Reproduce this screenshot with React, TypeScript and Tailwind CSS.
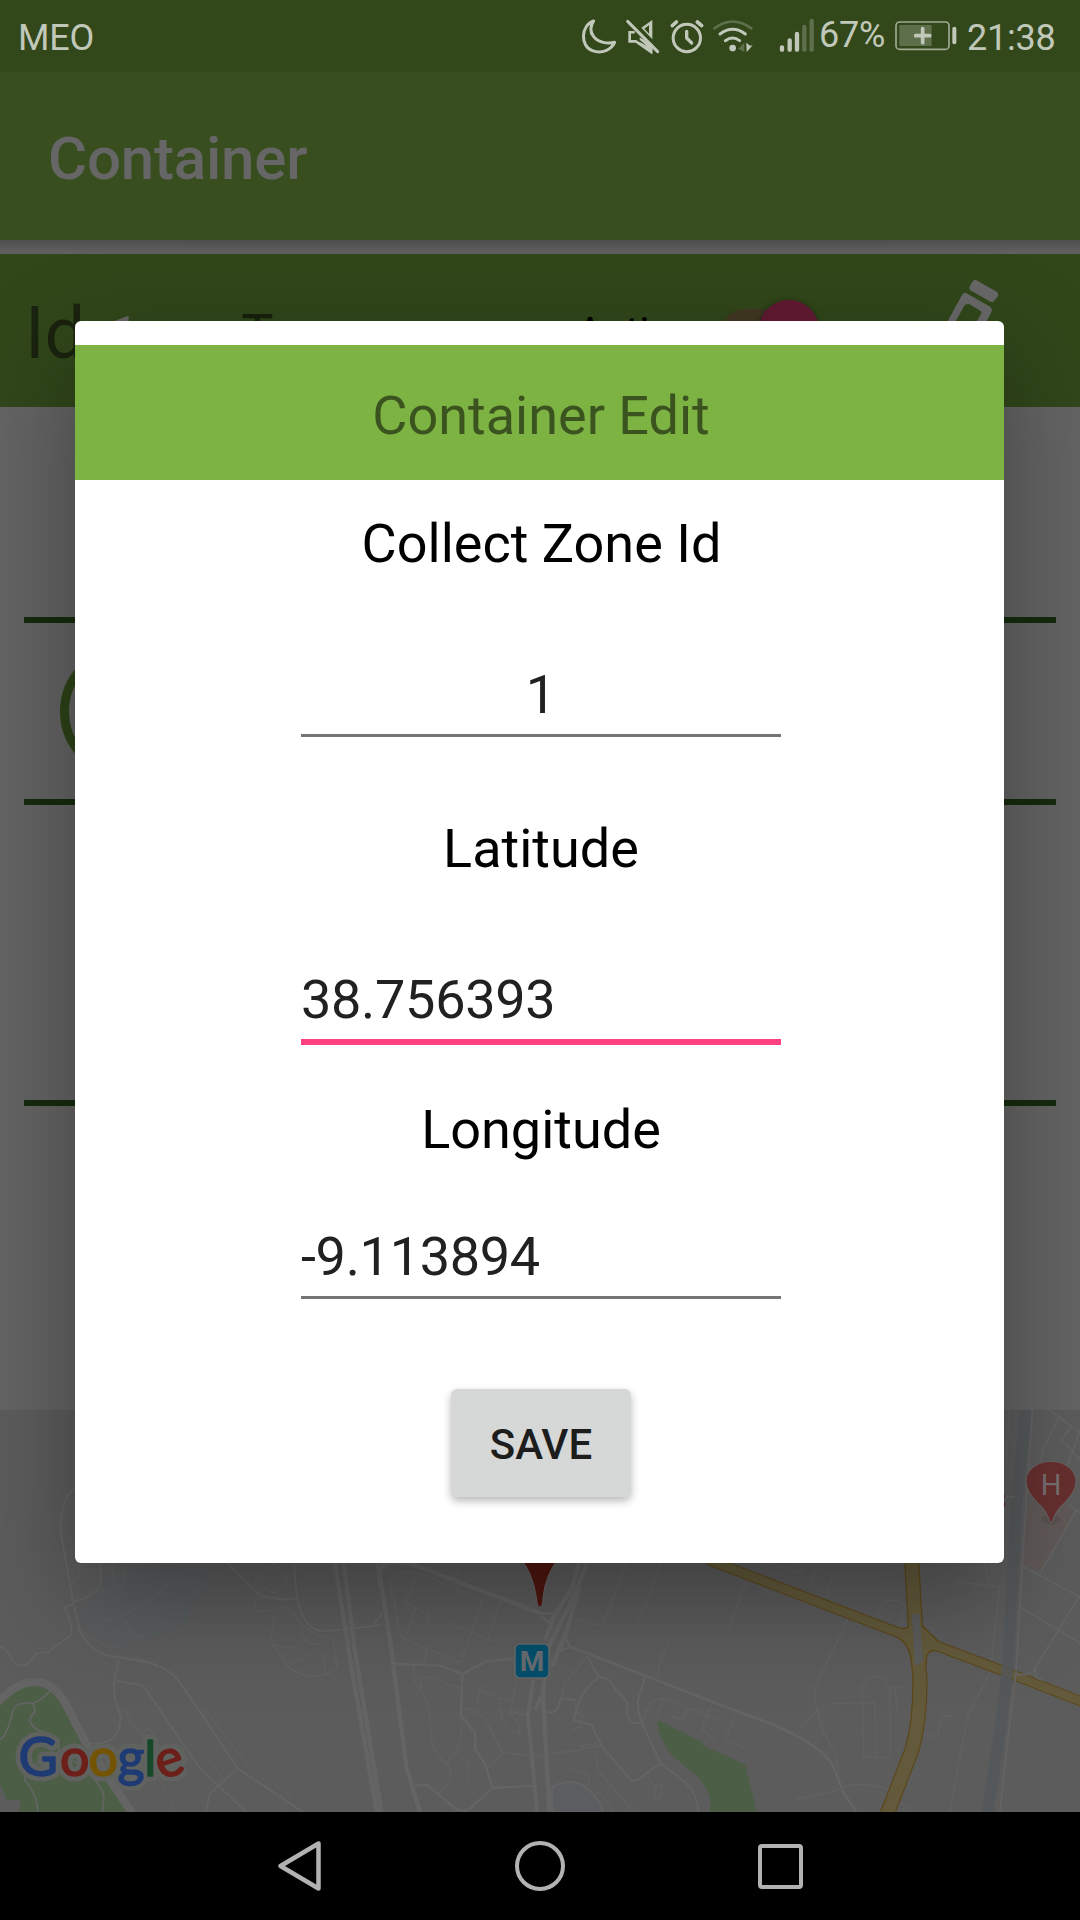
import type { ReactNode } from "react";

function StatusIcon({ x, w, children }: { x: number; w: number; children: ReactNode }) {
  return (
    <svg
      className="h-[72px] shrink-0"
      width={w / 3}
      height={72}
      viewBox={`${x} 0 ${w} 216`}
      fill="none"
      stroke="#c1c8ba"
      strokeLinecap="round"
      strokeLinejoin="round"
    >
      {children}
    </svg>
  );
}

function StatusBar() {
  return (
    <div className="flex h-[72px] items-start bg-[#32481b] text-[36px] leading-[42px] tracking-[-0.2px] text-[#c1c8ba]">
      <span className="mt-[17px] ml-[18px] flex-1">MEO</span>
      <StatusIcon x={60} w={130}>
        <path d="M101 63 C62 76 60 138 97 152 C126 163 154 149 164 127 C142 132 115 128 101 110 C89 95 91 78 101 63 Z" strokeWidth="9" />
      </StatusIcon>
      <StatusIcon x={190} w={130}>
        <path d="M222 97 H210 V124 H229 L274 156 V134" strokeWidth="8" strokeLinejoin="miter" />
        <path d="M245 83 L278 60 V118 Z M240 112 L278 136 V158 L240 130 Z" fill="#c1c8ba" stroke="none" />
        <path d="M254 86 L268 76 V101 Z M222 104 L262 138 L230 120 L214 120 V101 H222 Z" fill="#32481b" stroke="none" />
        <path d="M204 64 L294 155" strokeWidth="9" />
      </StatusIcon>
      <StatusIcon x={320} w={120}>
        <circle cx="379.500" cy="114" r="41" strokeWidth="9" />
        <path d="M379 94 V114 L394 129" strokeWidth="10" />
        <path d="M336 77 L348 66 M424 77 L411 66" strokeWidth="11" />
      </StatusIcon>
      <StatusIcon x={440} w={205}>
        <path d="M462 85 Q517 44 573 85" stroke="#5d704b" strokeWidth="8" />
        <path d="M479 102 Q517 74 555 102 M495 122 Q517 106 538 122" strokeWidth="9" />
        <circle cx="517" cy="144" r="10" fill="#c1c8ba" stroke="none" />
        <path d="M552 128 V156 L534 146 Z" fill="#5d704b" stroke="none" />
        <path d="M558 128 L569 137 L577 136 L559 156 Z" fill="#c1c8ba" stroke="none" />
      </StatusIcon>
      <StatusIcon x={645} w={132}>
        <path d="M666 142 V149 M689 121 V149 M711 102 V149" strokeWidth="13" />
        <path d="M733 81 V149 M755 63 V149" stroke="#5d704b" strokeWidth="13" />
      </StatusIcon>
      <span className="mt-[14px] w-[69px]">67%</span>
      <StatusIcon x={984} w={234}>
        <rect x="1008" y="66" width="159" height="82" rx="11" strokeWidth="5" stroke="#9faa92" />
        <rect x="1018" y="75" width="97" height="63" rx="3" fill="#5d704b" stroke="none" />
        <path d="M1088 86 V128 M1067 107 H1109" strokeWidth="11" />
        <path d="M1183 86 V127" strokeWidth="12" />
      </StatusIcon>
      <span className="mt-[17px] w-[114px] pl-px">21:38</span>
    </div>
  );
}

function ContainerBand() {
  return (
    <div className="flex h-[153px] items-start overflow-hidden bg-[#31471a]">
      <span className="mt-[38px] ml-[25px] text-[72px] leading-[84px] text-[#1a230f]">Id</span>
      <span className="mt-[49px] ml-[22px] w-[134px] text-[60px] leading-[70px] text-[#666]">1</span>
      <span className="mt-[48px] w-[335px] text-[54px] leading-[63px] text-[#17200c]">Type</span>
      <span className="mt-[54px] w-[147px] text-[42px] leading-[49px] text-black">Active</span>
      <div className="mt-[55px] flex h-[42px] w-[96px] items-center justify-end rounded-full bg-[#423823]">
        <div className="-my-2 h-[60px] w-[60px] shrink-0 rounded-full bg-[#621a33] shadow-[0_1px_6px_rgba(0,0,0,0.4)]" />
      </div>
      <svg className="mt-[16px] ml-[106px]" width="90" height="110" viewBox="925 270 90 110" fill="#686868">
        <path d="M976 280 L997 292 Q999 294 998 296 L994 301 Q993 302.500 990 301.500 L970 290 Q968.500 288 970 286 L973 281 Q974 279.500 976 280 Z" />
        <path
          fillRule="evenodd"
          d="M966 293 L989 306 Q993 308.500 991.500 312 L966 360 L932 372 L934 346 L962 295 Q964 292 966 293 Z M968 304 Q965 304 963 308 L942 346 L941 358 L959 351 L981 314 Q982 311 979 310 L970 304.500 Z"
        />
      </svg>
    </div>
  );
}

function Details() {
  return (
    <div className="mx-6 h-[1003px] pt-[210px]">
      <div className="flex h-[188px] items-center border-y-[6px] border-[#162b0e] pl-9">
        <div className="h-[133px] w-[133px] shrink-0 rounded-full border-[9px] border-[#2d4317]" />
      </div>
      <div className="h-[301px] border-b-[6px] border-[#162b0e]" />
    </div>
  );
}

function GoogleLogo() {
  const letters = [
    { ch: "G", x: 18.5, size: 54, color: "#1f3b74" },
    { ch: "o", x: 60, size: 52, color: "#6d1f1a" },
    { ch: "o", x: 88.5, size: 52, color: "#745403" },
    { ch: "g", x: 117.5, size: 52, color: "#1f3b74" },
    { ch: "l", x: 144.5, size: 49, color: "#16482a" },
    { ch: "e", x: 156, size: 52, color: "#6d1f1a" },
  ];
  return (
    <g fontFamily="Lato, sans-serif" strokeLinejoin="round">
      <g stroke="#5f625e" strokeWidth="11" fill="none">
        {letters.map((l, i) => (
          <text key={i} x={l.x} y="366" fontSize={l.size}>
            {l.ch}
          </text>
        ))}
      </g>
      {letters.map((l, i) => (
        <text
          key={i}
          x={l.x}
          y="366"
          fontSize={l.size}
          fill={l.color}
          stroke={l.color}
          strokeWidth="1.6"
          transform={l.ch === "e" ? "rotate(-18 170 353)" : undefined}
        >
          {l.ch}
        </text>
      ))}
    </g>
  );
}

function MapView() {
  return (
    <svg className="block h-[402px] w-[1080px] bg-[#5c5c5c]" viewBox="0 0 1080 402" fill="none" strokeLinejoin="round">
      <g transform="translate(0 -10) scale(0.34439 0.33333)" stroke="#646464">
        <path d="M330 510 L600 500 L606 560 L550 610 L545 670 L440 710 L340 745 L250 690 L230 640 Z" fill="#595d61" stroke="none" opacity="0.6" />
        <path d="M0 910 Q90 810 160 870 L370 1236 H55 L60 1200 H20 L0 1150 Z" fill="#4c5e46" stroke="none" />
        <path d="M-10 910 Q50 847 95 847 Q150 840 190 910 L255 1040 L390 1250" strokeWidth="24" />
        <path d="M147 872 Q120 900 96 910 Q45 905 38 930 Q20 1010 0 1018 M96 910 L102 935 Q70 965 110 990 Q180 1010 170 1060 Q70 1100 72 1140 Q108 1180 110 1236 M170 1050 Q290 1130 302 1190 L298 1236" strokeWidth="5" />
        <path d="M218 260 Q170 310 177 400 L212 605 L233 695 Q270 760 320 768 L425 784 Q500 810 520 845 L590 950 L690 1105 L885 1240" strokeWidth="6" />
        <path d="M212 605 Q293 585 292 540 V488 M212 612 L185 622 Q210 660 207 705 L140 755 L104 762 Q70 820 35 780 L15 745 L0 740 M345 780 L332 845 V890 L350 950 Q350 1000 320 1020 Q290 1035 260 1030 M340 842 L415 856 L580 1105 L730 1250 M690 1105 L610 1180 L598 1236 M320 768 L440 790 L460 803" strokeWidth="5" />
        <path d="M232 495 L230 535 L218 537 L208 552 M292 570 H330 M328 490 V540 Q345 600 361 550 V490 M290 648 L325 663 L435 603 L515 525 M355 655 L400 715 L433 695 M233 695 L320 744 L338 743 M357 920 L470 1080 M370 955 L405 1000 M410 1000 L433 983 L470 1055 M390 1160 L440 1100 L520 1250 M425 1220 L477 1185 M435 880 L464 866 M587 950 L604 940 L720 1097 M598 1065 L645 1130 M775 1155 L787 1145 L846 1187 L815 1236" strokeWidth="3" stroke="#626262" />
        <path d="M655 485 L750 580 Q780 602 863 595 M853 490 L863 595 Q880 690 940 694 L1110 675 M1080 678 L1110 640" strokeWidth="6" />
        <path d="M735 555 L795 490 Q835 520 831 550 Q800 600 765 560 M765 600 Q765 580 740 605 Q735 640 765 634 L830 622 L850 640 Q890 700 945 710 L967 720 L978 800 Q920 860 835 800 L785 720 L797 645 M835 798 L893 765 M790 735 L853 743 M938 762 L946 828 M873 690 Q885 740 935 730" strokeWidth="4" stroke="#626262" />
        <path d="M972 488 L1020 800 L1095 1240 M998 488 L1030 750 L1108 1240 M1095 488 L1110 570 L1135 740 L1180 1100 L1220 1240" strokeWidth="13" stroke="#646464" />
        <path d="M1105 560 Q1080 470 1190 490 L1570 640" strokeWidth="13" />
        <path d="M1145 525 Q1190 500 1260 538 L1400 603 L1338 787 L1175 718 L1207 625 L1244 640 L1240 662 M1145 525 Q1120 550 1145 600 L1158 700 L1175 718 M1210 525 L1177 607 L1207 625 M1302 668 L1443 728 M1453 605 L1418 714 M1310 565 L1342 490 M1240 745 L1230 790 M1200 795 L1203 850 Q1240 880 1248 945 L1250 1000 Q1260 1070 1298 1090 Q1320 1130 1298 1155 L1275 1180 M1205 840 Q1240 835 1210 880 M1205 835 Q1240 820 1305 855 L1335 862 M1342 922 Q1400 930 1420 980 L1460 1058 L1570 1070 M1460 1058 L1418 1100 M1345 968 L1328 1050 L1298 1090 M1328 1055 L1360 1090 V1140 M1385 905 L1390 870 L1450 895 L1482 905 M1390 870 L1410 848 M1450 895 Q1450 990 1510 1003 L1505 970 L1478 935 M1500 840 L1482 935 L1530 945" strokeWidth="4" stroke="#626262" />
        <path d="M1148 792 L1278 797 L1343 822 L1410 785 L1495 775 M1343 822 L1338 945 L1380 1000 V1048 L1410 1095 L1430 1164 L1550 1157 M1430 1164 L1365 1225 Q1340 1245 1310 1215 L1240 1155 H1205" strokeWidth="7" />
        <path d="M1548 840 L1533 950 L1560 1240 M1570 890 L1555 930" strokeWidth="11" />
      </g>
      <g transform="translate(540 -10) scale(0.34439 0.33333)" stroke="#646464">
        <path d="M342 960 L470 1025 L476 1038 L595 1093 L630 1236 H494 V1195 Q480 1145 440 1115 L382 1065 Q350 1020 342 980 Z" fill="#4c5e46" stroke="none" />
        <path d="M35 1236 V1160 Q130 1110 185 1236 Z" fill="#5b5d60" stroke="#646464" strokeWidth="6" />
        <path d="M1418 305 L1515 300 L1558 330 L1455 515 L1400 490 Z" fill="#605957" stroke="none" />
        <path d="M140 480 L100 585 L25 740 L8 880 L28 1240 M115 480 L95 560 L40 650 L15 720 M115 560 L75 700 L35 800" strokeWidth="13" />
        <path d="M0 640 L50 642 M0 650 Q35 665 35 690 M75 700 Q75 735 95 743 L300 825 L570 933 L680 975 Q820 1040 850 1095 L880 1175 L920 1240" strokeWidth="8" />
        <path d="M35 800 Q50 740 95 743 M137 770 L172 832 M60 895 L108 900 M10 930 Q50 955 58 900 L60 895 M172 832 Q205 830 220 870 L252 905 Q250 970 275 970 L295 968 M172 832 Q115 870 98 960 L150 975 L180 1040 L260 1135 Q275 1150 290 1135 L350 1090 M305 830 L285 900 Q280 940 310 1000 L350 1090 L420 1145 Q460 1185 460 1240" strokeWidth="6" />
        <path d="M250 488 L185 670 Q180 680 170 675 L95 655 M352 488 L287 665 M602 540 L548 683 M625 545 Q660 590 700 580 M670 490 L755 518 L768 490 M812 490 L780 560 M855 515 L830 590 M975 660 L998 605 Q1040 590 1062 620 L1043 680 M1017 493 H1060 M377 710 L345 800 L342 840 M137 770 L75 845 L60 895 M100 905 L105 935 L130 955 M90 990 L120 980 V965 M0 1065 L115 1050 L175 1035 M120 1050 V1038 L165 1030 M162 1050 L168 1110 L270 1235 M85 1108 Q150 1110 142 1155 M312 1130 L335 1165 L330 1200 L350 1195 L355 1155 L335 1155 M155 1175 Q180 1170 210 1236 M425 1185 L445 1205 M295 965 L325 905 Q350 890 375 900 L520 958 M342 965 V940 L362 900 M375 948 L415 958 L430 928 M500 908 L470 985 L508 1022 M570 938 L538 1018 L590 1045 M893 658 L800 860 Q790 900 825 995 L858 1065 L867 1120 M745 1008 Q800 910 860 911 L973 908 L976 1075 M825 995 L793 1035 M935 860 Q978 800 1015 860 L1018 1065 Q1000 1080 940 1068 Z M1018 865 L1055 860 M1030 865 L1040 940 M742 1200 L865 1170 Q910 1140 1015 1167 M980 1175 L1080 1228 M1110 1000 L1153 1012 L1167 945 L1200 948 M1192 1236 L1210 1120 L1243 945 L1308 815 L1335 560 L1215 546 M1290 488 L1305 548 M1355 180 L1362 30" strokeWidth="4" stroke="#626262" />
        <path d="M490 480 L1040 698 Q1090 720 1150 737 L1350 815 L1580 908" stroke="#5d4719" strokeWidth="31" />
        <path d="M1079 480 L1092 710 L1103 830 Q1105 960 1080 1050 L1005 1250" stroke="#5d4719" strokeWidth="44" />
        <path d="M1015 675 Q1065 700 1078 670 L1113 680 L1155 722 L1145 752 Q1120 750 1122 790 L1080 790 Q1075 730 1030 707 Z" fill="#635a3b" stroke="#5d4719" strokeWidth="4" />
        <path d="M490 480 L1040 698 Q1090 720 1150 737 L1350 815 L1580 908" stroke="#635a3b" strokeWidth="25" />
        <path d="M1079 480 L1092 710 L1103 830 Q1105 960 1080 1050 L1005 1250" stroke="#635a3b" strokeWidth="37" />
        <path d="M1080 643 H1102 L1112 780 L1098 797 L1088 790 Z" fill="#5c5c5c" stroke="none" />
        <path d="M1412 20 L1385 300 L1358 800 L1340 960 L1300 1240" stroke="#54575a" strokeWidth="34" opacity="0.8" />
        <path d="M1430 30 L1412 300 L1382 820 L1360 1000 L1335 1240" strokeWidth="5" />
        <path d="M1480 30 L1570 100 M1505 55 L1460 150 L1455 185 M1545 75 L1515 120 L1570 180 M1570 85 L1530 205 M1395 495 L1570 592 M1395 622 L1570 730 M1558 330 L1455 515 M1570 582 L1440 800 Q1430 835 1460 840 M1438 800 Q1430 830 1380 822 M1535 315 L1570 340 M1348 290 H1378" strokeWidth="5" />
        <ellipse cx="1484" cy="358" rx="28" ry="15" fill="#4a4343" opacity="0.3" stroke="none" />
        <path d="M1484 366 C1479 366 1480 343 1454 316 C1375 242 1425 186 1484 186 C1543 186 1593 242 1514 316 C1488 343 1489 366 1484 366 Z" fill="#672f2f" stroke="#696363" strokeWidth="6" paintOrder="stroke" />
      </g>
      <text x="1051" y="85" textAnchor="middle" fontSize="29" fontFamily="Roboto, sans-serif" fill="#777070">H</text>
      <text x="1006.500" y="99" textAnchor="end" fontSize="32" fontWeight="500" fontFamily="Roboto, sans-serif" fill="#59201f">s</text>
      <path d="M518 145 Q533 162 536.500 188 Q537 197 540 197 Q542.500 197 543 188 Q545 164 561 145 Z" fill="#50160f" stroke="#646464" strokeWidth="1" />
      <rect x="515" y="234" width="34" height="34" rx="5" fill="#044f6c" stroke="#63686a" strokeWidth="1.500" />
      <text x="532" y="261" textAnchor="middle" fontSize="28" fontWeight="700" fontFamily="Roboto, sans-serif" fill="#666c70">M</text>
      <GoogleLogo />
    </svg>
  );
}

function NavBar() {
  return (
    <div className="flex h-[108px] items-center justify-center gap-[191px] bg-black">
      <svg width="48" height="54" viewBox="276 1839 48 54" fill="none" stroke="#b2b2b2" strokeWidth="4.500" strokeLinejoin="round">
        <path d="M280.500 1866 L318.500 1843.500 V1888.500 Z" />
      </svg>
      <div className="h-[50px] w-[50px] rounded-full border-[4.500px] border-[#b2b2b2]" />
      <div className="flex w-[48px] justify-center">
        <div className="h-[45px] w-[45px] rounded-[4px] border-4 border-[#b2b2b2]" />
      </div>
    </div>
  );
}

function EditDialog() {
  return (
    <div className="absolute top-[321px] left-[75px] flex h-[1242px] w-[929px] flex-col items-center rounded-[6px] bg-white pt-6 pl-[3px] text-[54px] leading-[63px] text-black shadow-[0_34px_100px_rgba(0,0,0,0.34)]">
      <h2 className="-ml-[3px] h-[135px] w-[929px] bg-[#7db343] pt-[39px] pl-[3px] text-center text-[#3b541f]">Container Edit</h2>
      <label className="mt-8 pl-px">Collect Zone Id</label>
      <div className="mt-[88px] w-[480px] border-b-[3px] border-[#757575] pb-2 text-center text-[#212121]">1</div>
      <label className="mt-20">Latitude</label>
      <div className="mt-[88px] w-[480px] border-b-[6px] border-[#ff4081] pb-2 tracking-[-0.3px] text-[#212121]">38.756393</div>
      <label className="mt-[53px]">Longitude</label>
      <div className="mt-16 w-[480px] border-b-[3px] border-[#757575] pb-2 tracking-[-0.3px] text-[#212121]">-9.113894</div>
      <button className="mt-[90px] h-[108px] w-[180px] rounded-[6px] bg-[#d6d7d7] pt-[2px] text-[42px] leading-[49px] font-medium text-[#1d1d1d] shadow-[0_4px_8px_rgba(0,0,0,0.28)]">
        SAVE
      </button>
    </div>
  );
}

export default function App() {
  return (
    <div className="relative h-[1920px] w-[1080px] overflow-hidden bg-[#646464] font-['Roboto',sans-serif]">
      <StatusBar />
      <header className="h-[168px] bg-[#384e1f] pt-[52px] pl-12 text-[60px] leading-[70px] font-medium tracking-[-0.2px] text-[#666667]">Container</header>
      <div className="h-[14px] bg-gradient-to-b from-[#4e4e4e] to-[#626262]" />
      <ContainerBand />
      <Details />
      <MapView />
      <NavBar />
      <EditDialog />
    </div>
  );
}
